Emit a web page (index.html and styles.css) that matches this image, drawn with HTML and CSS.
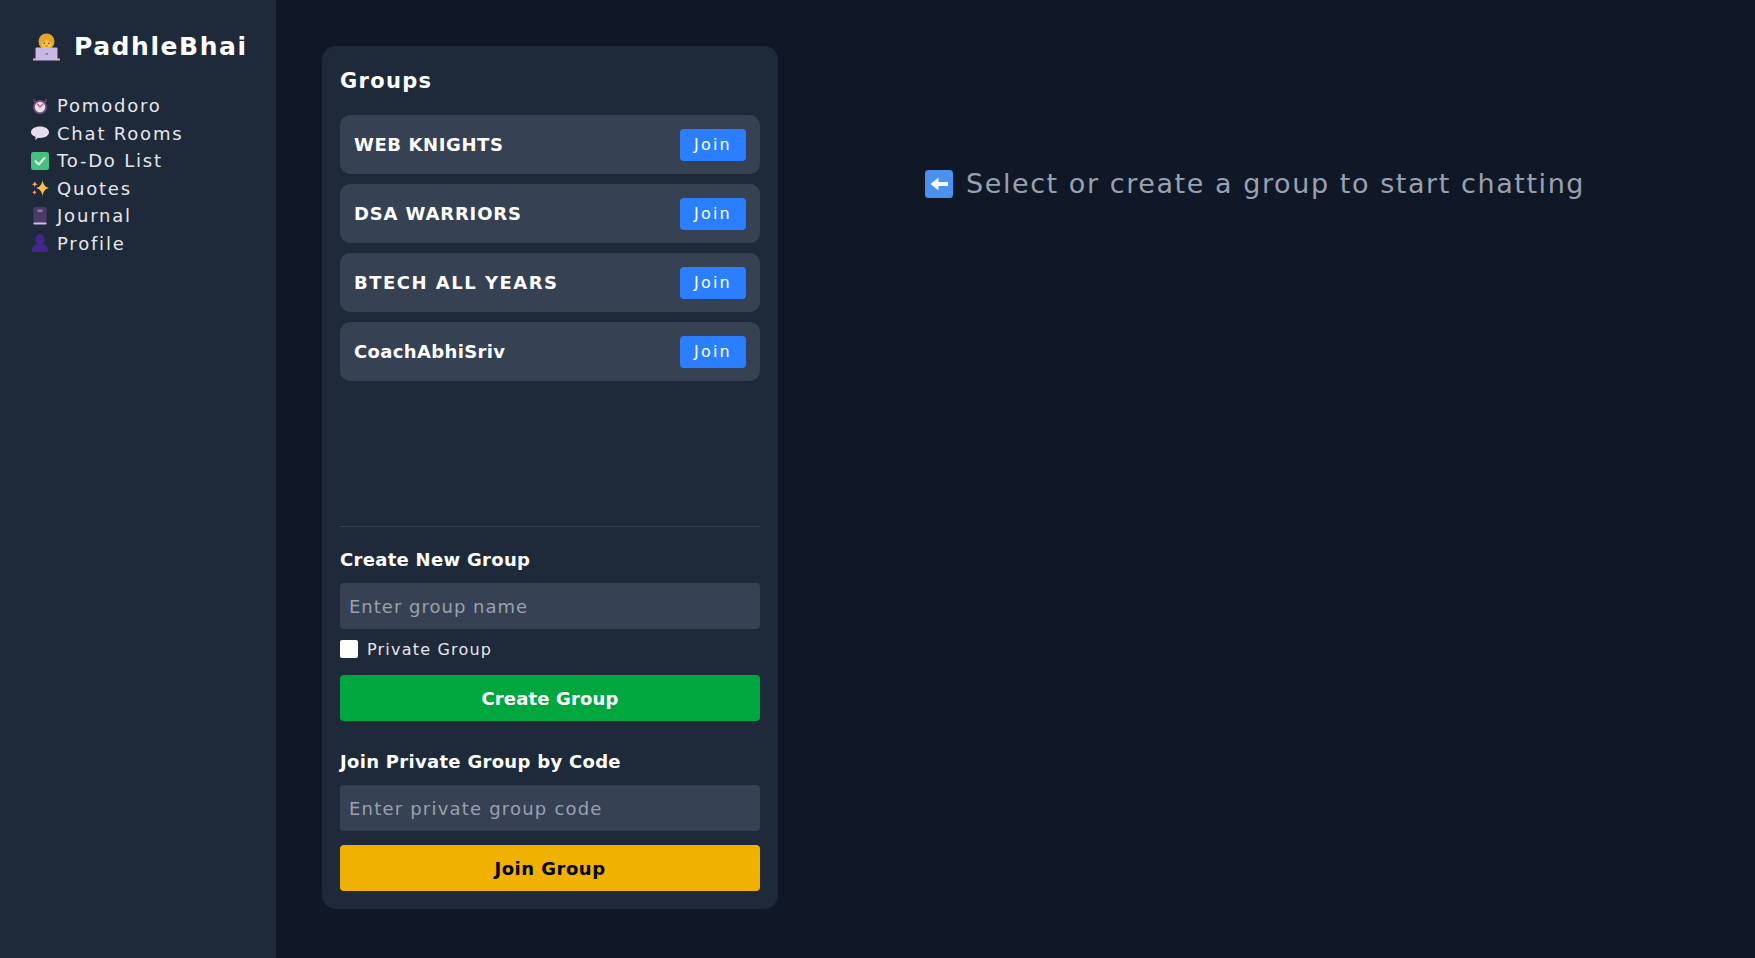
FILE: index.html
```html
<!DOCTYPE html>
<html lang="en">
<head>
<meta charset="utf-8">
<title>PadhleBhai</title>
<link rel="stylesheet" href="styles.css">
</head>
<body>
<div class="app">
  <aside class="sidebar">
    <h1 class="brand">
      <svg class="brand-icon" viewBox="0 0 28 28" aria-hidden="true">
        <circle cx="13.500" cy="8.500" r="8" fill="#e8a52a"/>
        <path d="M8.500 9.500c2.200-.4 3.800-1.300 5-3.300 1.200 2 2.800 2.900 5 3.300 0 3.700-2.200 6.500-5 6.500s-5-2.800-5-6.500z" fill="#f6c544"/>
        <circle cx="11.200" cy="10.200" r=".8" fill="#5a3a1c"/>
        <circle cx="15.800" cy="10.200" r=".8" fill="#5a3a1c"/>
        <path d="M12.400 13h2.200" stroke="#c2552f" stroke-width=".8" stroke-linecap="round"/>
        <path d="M0 25.500h3.500v2H0zM23.500 25.500H27v2h-3.500z" fill="#f0b84a"/>
        <rect x="2.500" y="14.500" width="22" height="13" rx="1.200" fill="#c8b8e6"/>
        <path d="M12.500 20h.9v1.800h-.9zM14.100 20h.9v1.800h-.9z" fill="#6a5a96"/>
      </svg>
      <span>PadhleBhai</span>
    </h1>
    <nav class="nav">
      <a class="nav-link">
        <svg class="nav-icon" viewBox="0 0 18 18" aria-hidden="true">
          <path d="M3.500 4.500 2.800 2.700M14.500 4.500l.7-1.800" stroke="#5e4468" stroke-width="2" stroke-linecap="round"/>
          <circle cx="9" cy="10" r="7" fill="#6f5482"/>
          <circle cx="9" cy="10" r="5.200" fill="#e6dbe8"/>
          <path d="M9 10 6.500 7M9 10l3-3" stroke="#c9567a" stroke-width="1.200" stroke-linecap="round"/>
        </svg>
        Pomodoro
      </a>
      <a class="nav-link">
        <svg class="nav-icon" viewBox="0 0 18 18" aria-hidden="true">
          <path d="M9 2.500c5 0 9 2.400 9 5.800s-4 5.700-9 5.700c-.8 0-1.500 0-2.200-.2C6 15 5 15.600 3.800 15.800c.6-.8.9-1.700.9-2.700C1.800 12 0 10.300 0 8.300 0 4.900 4 2.500 9 2.500z" fill="#e6def0"/>
        </svg>
        Chat Rooms
      </a>
      <a class="nav-link">
        <svg class="nav-icon" viewBox="0 0 18 18" aria-hidden="true">
          <rect width="18" height="18" rx="2.500" fill="#45c07e"/>
          <path d="M4.500 9.300 7.700 12.500 13.500 6" fill="none" stroke="#f2f7f0" stroke-width="2" stroke-linecap="round" stroke-linejoin="round"/>
        </svg>
        To-Do List
      </a>
      <a class="nav-link">
        <svg class="nav-icon" viewBox="0 0 18 18" aria-hidden="true">
          <path d="M11.500 1c.7 4.700 2.500 6.800 6.500 8-4 1.200-5.800 3.300-6.500 8-.7-4.700-2.500-6.800-6.500-8 4-1.200 5.800-3.300 6.500-8z" fill="#f9c04a"/>
          <path d="M3.800 2c.3 2 1 2.800 3 3.300-2 .5-2.700 1.300-3 3.300-.3-2-1-2.800-3-3.300 2-.5 2.700-1.300 3-3.300z" fill="#f3a76a"/>
          <path d="M3.500 10.500c.3 1.800.9 2.400 2.700 2.800-1.800.4-2.400 1-2.700 2.800-.3-1.800-.9-2.400-2.700-2.800 1.800-.4 2.400-1 2.700-2.800z" fill="#ee9a5c"/>
        </svg>
        Quotes
      </a>
      <a class="nav-link">
        <svg class="nav-icon" viewBox="0 0 18 18" aria-hidden="true">
          <path d="M2.500 1.500A1.500 1.500 0 0 1 4 0h10a1.500 1.500 0 0 1 1.500 1.500V17h-13z" fill="#4d3a66"/>
          <rect x="2.500" y="15.500" width="13" height="2" rx=".5" fill="#c9bfdc"/>
          <rect x="6.500" y="2.500" width="5" height="2.500" rx=".5" fill="#8a7aa6"/>
        </svg>
        Journal
      </a>
      <a class="nav-link">
        <svg class="nav-icon" viewBox="0 0 18 18" aria-hidden="true">
          <path d="M9 0c2.600 0 4.500 2.200 4.500 5 0 2.200-.8 3.800-2 4.800 3.300.8 5.500 3.300 5.500 7 0 .7-.5 1.200-1.200 1.200H2.200C1.500 18 1 17.500 1 16.800c0-3.700 2.200-6.200 5.500-7-1.200-1-2-2.600-2-4.800C4.500 2.200 6.400 0 9 0z" fill="#44268a"/>
        </svg>
        Profile
      </a>
    </nav>
  </aside>
  <main class="main">
    <section class="panel">
      <h2 class="panel-title">Groups</h2>
      <div class="group-list">
        <div class="group"><span class="group-name name-a">WEB KNIGHTS</span><button class="join">Join</button></div>
        <div class="group"><span class="group-name name-b">DSA WARRIORS</span><button class="join">Join</button></div>
        <div class="group"><span class="group-name name-c">BTECH ALL YEARS</span><button class="join">Join</button></div>
        <div class="group"><span class="group-name name-d">CoachAbhiSriv</span><button class="join">Join</button></div>
      </div>
      <div class="forms">
        <h3 class="form-title">Create New Group</h3>
        <input class="field" placeholder="Enter group name">
        <label class="check"><input type="checkbox" class="box">Private Group</label>
        <button class="btn btn-green">Create Group</button>
        <h3 class="form-title second">Join Private Group by Code</h3>
        <input class="field field-join" placeholder="Enter private group code">
        <button class="btn btn-yellow">Join Group</button>
      </div>
    </section>
    <section class="chat">
      <p class="hint">
        <svg class="hint-icon" viewBox="0 0 28 28" aria-hidden="true">
          <rect width="28" height="28" rx="3.500" fill="#4a90ee"/>
          <path d="M23 12H13.500V7.500L5.500 14l8 6.500V16H23z" fill="#f4f8fd"/>
        </svg>
        Select or create a group to start chatting
      </p>
    </section>
  </main>
</div>
</body>
</html>
```
FILE: styles.css
```css
* { box-sizing: border-box; }
html, body { height: 100%; }
body {
  margin: 0;
  background: #101828;
  color: #fff;
  font-family: "DejaVu Sans", sans-serif;
  overflow: hidden;
}
.app { display: flex; height: 958px; }
.sidebar {
  width: 276px;
  flex: none;
  background: #1e2939;
  padding: 28px 31px;
}
.brand {
  margin: 0;
  display: flex;
  align-items: center;
  gap: 13px;
  font-size: 25px;
  font-weight: 700;
  line-height: 37px;
  letter-spacing: 1.550px;
}
.brand-icon { width: 28px; height: 28px; flex: none; margin-left: 2px; }
.nav { margin-top: 27px; display: flex; flex-direction: column; }
.nav-link {
  display: flex;
  align-items: center;
  gap: 8px;
  height: 27.500px;
  font-size: 18px;
  letter-spacing: 1.800px;
  color: #e5e7eb;
}
.nav-icon { width: 18px; height: 18px; flex: none; }
.main { flex: 1; display: flex; padding: 46px 46px 49px; }
.panel {
  width: 456px;
  flex: none;
  background: #1e2939;
  border-radius: 14px;
  padding: 18px;
  display: flex;
  flex-direction: column;
}
.panel-title { margin: 0 0 17px; font-size: 21px; line-height: 34px; font-weight: 700; letter-spacing: 1.300px; }
.group-list { flex: 1; display: flex; flex-direction: column; gap: 10px; }
.group {
  height: 59px;
  flex: none;
  background: #364153;
  border-radius: 10px;
  padding: 0 14px;
  display: flex;
  align-items: center;
  justify-content: space-between;
}
.group-name { font-size: 18px; font-weight: 600; }
.name-a { letter-spacing: .6px; }
.name-b { letter-spacing: .85px; }
.name-c { letter-spacing: 1.500px; }
.name-d { letter-spacing: .35px; }
.join {
  width: 66px;
  height: 32px;
  border: 0;
  border-radius: 4px;
  background: #2b7fff;
  color: #fff;
  font: inherit;
  font-size: 16px;
  letter-spacing: 2.200px;
}
.forms { border-top: 1px solid #364153; padding-top: 21px; display: flex; flex-direction: column; }
.form-title { margin: 0 0 11px; font-size: 18px; line-height: 24px; font-weight: 600; letter-spacing: .3px; }
.form-title.second { margin-top: 29px; }
.field {
  height: 46px;
  border: 0;
  border-radius: 4px;
  background: #364153;
  color: #fff;
  padding: 0 9px;
  font: inherit;
  font-size: 18px;
  letter-spacing: 1px;
}
.field-join { letter-spacing: 1.200px; }
.field::placeholder { color: #99a1af; }
.check { display: flex; align-items: center; gap: 9px; font-size: 16px; letter-spacing: 1.200px; color: #e5e7eb; margin: 9px 0 15px; height: 22px; }
.box { width: 18px; height: 18px; margin: 0; appearance: none; background: #fff; border-radius: 2px; }
.btn {
  height: 46px;
  border: 0;
  border-radius: 4px;
  font: inherit;
  font-size: 18px;
  font-weight: 600;
}
.field-join + .btn { margin-top: 14px; }
.btn-green { background: #00a63e; color: #fff; letter-spacing: .15px; }
.btn-yellow { background: #f0b100; color: #000; letter-spacing: .5px; }
.chat { flex: 1; padding-left: 148px; }
.hint {
  margin: 118px 0 0;
  display: flex;
  align-items: center;
  gap: 13px;
  font-size: 27px;
  line-height: 40px;
  letter-spacing: 1.570px;
  color: #99a1af;
  white-space: nowrap;
}
.hint-icon { width: 28px; height: 28px; flex: none; margin-left: -1px; }
```
